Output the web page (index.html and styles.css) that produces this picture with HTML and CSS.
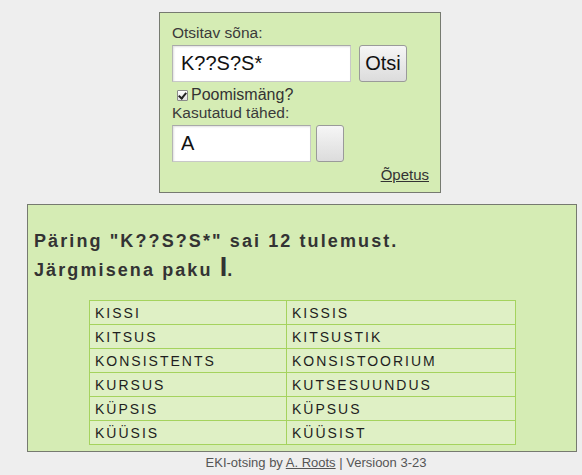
FILE: index.html
```html
<!DOCTYPE html>
<html lang="et">
<head>
<meta charset="utf-8">
<title>EKI-otsing</title>
<link rel="stylesheet" href="styles.css">
</head>
<body>
<form class="search-box">
  <label class="lbl" for="q">Otsitav sõna:</label>
  <div class="row">
    <input class="field field-wide" id="q" type="text" value="K??S?S*">
    <button class="btn" type="button">Otsi</button>
  </div>
  <label class="check"><input type="checkbox" checked>Poomismäng?</label>
  <label class="lbl" for="used">Kasutatud tähed:</label>
  <div class="row">
    <input class="field field-narrow" id="used" type="text" value="A">
    <button class="btn btn-empty" type="button"></button>
  </div>
  <div class="help"><a href="#">Õpetus</a></div>
</form>

<div class="results">
  <p class="summary">Päring "K??S?S*" sai 12 tulemust.<br>Järgmisena paku <span class="big">I</span>.</p>
  <table class="words">
    <tr><td>KISSI</td><td>KISSIS</td></tr>
    <tr><td>KITSUS</td><td>KITSUSTIK</td></tr>
    <tr><td>KONSISTENTS</td><td>KONSISTOORIUM</td></tr>
    <tr><td>KURSUS</td><td>KUTSESUUNDUS</td></tr>
    <tr><td>KÜPSIS</td><td>KÜPSUS</td></tr>
    <tr><td>KÜÜSIS</td><td>KÜÜSIST</td></tr>
  </table>
</div>

<div class="footer">EKI-otsing by <a href="#">A. Roots</a> | Versioon 3-23</div>
</body>
</html>
```

FILE: styles.css
```css
html, body {
  margin: 0;
  padding: 0;
  background: #eeeeee;
  font-family: "Liberation Sans", Arial, sans-serif;
  color: #333;
}

.search-box {
  box-sizing: border-box;
  width: 282px;
  height: 181px;
  margin: 12px 0 0 159px;
  padding: 11px 11px 0 12px;
  background: #d5ecb4;
  border: 1px solid #767a70;
  display: flex;
  flex-direction: column;
}

.lbl {
  font-size: 15.5px;
  line-height: 18px;
  color: #3a3a3a;
}

.row {
  display: flex;
  gap: 8px;
  margin-top: 3px;
}

.field {
  box-sizing: border-box;
  height: 37px;
  border: 1px solid #c8c8c8;
  border-top-color: #a9a9a9;
  border-left-color: #b5b5b5;
  box-shadow: inset 1px 1px 2px rgba(0,0,0,0.12);
  background: #fff;
  font-family: "Liberation Sans", Arial, sans-serif;
  font-size: 20px;
  color: #111;
  padding: 0 8px;
  margin: 0;
  outline: none;
}

.field-wide { width: 179px; }
.field-narrow { width: 139px; margin-right: -3px; }

.btn {
  box-sizing: border-box;
  width: 48px;
  height: 37px;
  margin: 0;
  border: 1px solid #9a9a9a;
  border-radius: 3px;
  background: linear-gradient(#f6f6f6, #dcdcdc);
  font-family: "Liberation Sans", Arial, sans-serif;
  font-size: 20px;
  color: #111;
  padding: 0;
}

.btn-empty { width: 28px; }

.check {
  display: flex;
  align-items: center;
  margin: 3px 0 0 5px;
  font-size: 16px;
  line-height: 19px;
  color: #333;
}

.check input {
  appearance: none;
  -webkit-appearance: none;
  position: relative;
  box-sizing: border-box;
  width: 11px;
  height: 11px;
  margin: 1px 3px 0 0;
  border: 1px solid #8a8a8a;
  border-radius: 1px;
  background: linear-gradient(#fdfdfd, #e2e2e2);
}

.check input:checked::after {
  content: "";
  position: absolute;
  left: 2px;
  top: 0px;
  width: 3px;
  height: 6px;
  border: solid #222;
  border-width: 0 2px 2px 0;
  transform: rotate(40deg);
}

.help {
  text-align: right;
  margin-top: 4px;
  font-size: 15px;
}

.help a { color: #333; }

.results {
  box-sizing: border-box;
  width: 550px;
  height: 248px;
  margin: 11px 0 0 27px;
  padding: 22px 6px 0 6px;
  background: #d5ecb4;
  border: 1px solid #767a70;
}

.summary {
  margin: 0;
  font-weight: bold;
  font-size: 18px;
  line-height: 29px;
  letter-spacing: 2.1px;
  color: #333;
}

.summary .big {
  font-size: 27px;
  font-weight: bold;
  letter-spacing: 0;
  line-height: 20px;
}

.words {
  border-collapse: collapse;
  table-layout: fixed;
  margin: 15px 0 0 55px;
  width: 427px;
}

.words td {
  box-sizing: border-box;
  height: 24px;
  padding: 0 5px;
  border: 1px solid #a5d35e;
  background: #dff0c5;
  font-size: 14px;
  letter-spacing: 2px;
  color: #1e1e1e;
}

.words td:first-child { width: 197px; }

.footer {
  text-align: center;
  margin: 3px 0 0 50px;
  font-size: 13px;
  color: #555;
}

.footer a { color: #555; }
```
